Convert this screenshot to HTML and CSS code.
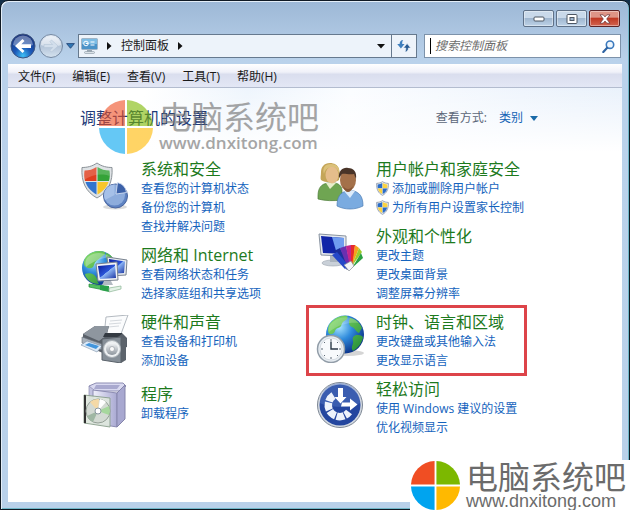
FILE: index.html
```html
<!DOCTYPE html>
<html lang="zh-CN">
<head>
  <meta charset="UTF-8">
  <meta name="viewport" content="width=device-width, initial-scale=1.0">
  <title>控制面板</title>
  <link rel="stylesheet" href="styles.css">
</head>
<body>
  <!-- shared gradients and symbols -->
  <svg class="defs" width="0" height="0" aria-hidden="true">
    <defs>
      <radialGradient id="globe" cx="0.35" cy="0.3" r="0.75">
        <stop offset="0" stop-color="#a8e4ff"/><stop offset="0.45" stop-color="#2f8bdc"/><stop offset="1" stop-color="#0a2f86"/>
      </radialGradient>
      <linearGradient id="screen" x1="0" y1="0" x2="1" y2="1">
        <stop offset="0" stop-color="#0a1c9c"/><stop offset="0.5" stop-color="#2b55d8"/><stop offset="0.52" stop-color="#8db6f5"/><stop offset="1" stop-color="#16309f"/>
      </linearGradient>
      <linearGradient id="land" x1="0" y1="0" x2="1" y2="1">
        <stop offset="0" stop-color="#8be06a"/><stop offset="1" stop-color="#1f8a34"/>
      </linearGradient>
      <linearGradient id="metal" x1="0" y1="0" x2="0" y2="1">
        <stop offset="0" stop-color="#f4f6f8"/><stop offset="1" stop-color="#8d959d"/>
      </linearGradient>
      <linearGradient id="lilac" x1="0" y1="0" x2="1" y2="0">
        <stop offset="0" stop-color="#f0f0fb"/><stop offset="1" stop-color="#a9a9d2"/>
      </linearGradient>
      <radialGradient id="navBlue" cx="0.5" cy="0.9" r="0.9">
        <stop offset="0" stop-color="#3fc0f5"/><stop offset="0.4" stop-color="#1b58b8"/><stop offset="1" stop-color="#1a3077"/>
      </radialGradient>
      <linearGradient id="navGrey" x1="0" y1="0" x2="0" y2="1">
        <stop offset="0" stop-color="#e6edf6"/><stop offset="0.5" stop-color="#b3c4d8"/><stop offset="1" stop-color="#d5e2ef"/>
      </linearGradient>
      <symbol id="uac" viewBox="0 0 14 16">
        <path d="M7 .6C5 2 3 2.4.7 2.5.3 9 2.600 13 7 15.400 11.400 13 13.700 9 13.300 2.500 11 2.400 9 2 7 .6z" fill="#e8eef5" stroke="#7d8a9c" stroke-width=".8"/>
        <path d="M6.800 2.200V7.600H1.900C1.700 6.300 1.700 5 1.800 3.600 3.700 3.500 5.200 3.100 6.800 2.200z" fill="#2a6cc8"/>
        <path d="M7.200 2.200V7.600h4.900c.2-1.300.2-2.600.1-4C10.300 3.500 8.800 3.100 7.200 2.200z" fill="#fbd341"/>
        <path d="M6.800 8v6C4.100 12.500 2.600 10.600 2 8z" fill="#fbd341"/>
        <path d="M7.200 8v6C9.900 12.500 11.400 10.600 12 8z" fill="#2a6cc8"/>
      </symbol>
      <symbol id="disc" viewBox="0 0 54 54">
        <path d="M26 0v26H0A27 27 0 0 1 26 0z" fill="#f04e23"/>
        <path d="M28 0v26h26A27 27 0 0 0 28 0z" fill="#7cb800"/>
        <path d="M26 54V28H0a27 27 0 0 0 26 26z" fill="#00a4ef"/>
        <path d="M28 54V28h26a27 27 0 0 1-26 26z" fill="#ffb900"/>
      </symbol>
    </defs>
  </svg>

  <div class="window">
    <div class="titlebar">
      <button class="win-btn" aria-label="最小化">
        <svg width="12" height="7" viewBox="0 0 12 7"><rect x="1" y="2" width="10" height="4" rx="1" fill="#fff" stroke="#4d5663"/></svg>
      </button>
      <button class="win-btn" aria-label="最大化">
        <svg width="12" height="10" viewBox="0 0 12 10"><rect x="1" y=".5" width="10" height="9" rx="1" fill="#fff" stroke="#4d5663"/><rect x="4" y="3.500" width="4" height="3" fill="#9fb6cf" stroke="#4d5663"/></svg>
      </button>
      <button class="win-btn close-btn" aria-label="关闭">
        <svg width="12" height="10" viewBox="0 0 12 10"><path d="M1 .8h3.200L6 2.900 7.800.8H11L7.700 5 11 9.200H7.800L6 7.100 4.200 9.200H1L4.300 5z" fill="#fff" stroke="#6e3a3c" stroke-width=".8"/></svg>
      </button>
    </div>

    <div class="navbar">
      <div class="nav-buttons">
        <button class="nav-btn" aria-label="后退">
          <svg width="26" height="26" viewBox="0 0 26 26"><circle cx="13" cy="13" r="12" fill="url(#navBlue)" stroke="#3d5580" stroke-width="1"/><path d="M3 12a10 9.500 0 0 1 20 0c-5 2-15 2-20 0z" fill="#fff" opacity=".35"/><path d="M5 13l7.500-7 2 2-3.200 3.300H21v3.600h-9.700l3.200 3.200-2 2z" fill="#fff"/></svg>
        </button>
        <button class="nav-btn" aria-label="前进">
          <svg width="26" height="26" viewBox="0 0 26 26"><circle cx="13" cy="13" r="11.500" fill="url(#navGrey)" stroke="#7488a2"/><path d="M3 12a10 9 0 0 1 20 0c-5 2-15 2-20 0z" fill="#fff" opacity=".45"/><path d="M20 13l-6.500-6-1.600 1.700 2.800 2.800H6v3h8.700l-2.800 2.800 1.600 1.700z" fill="#d3dfec" stroke="#b4c4d6" stroke-width=".6"/></svg>
        </button>
        <button class="nav-btn nav-history" aria-label="最近的页面">
          <svg width="9" height="6" viewBox="0 0 9 6"><path d="M.6.600h7.800L4.500 5.300z" fill="#2f77b5" stroke="#1f3f70" stroke-width=".8"/></svg>
        </button>
      </div>
      <div class="address">
        <nav class="crumbs" aria-label="地址">
          <svg width="17" height="16" viewBox="0 0 17 16"><rect x=".5" y=".5" width="16" height="11" rx="1" fill="#4a93c8" stroke="#9fb4c6"/><path d="M1 1h15v5H1z" fill="#7cbce4"/><circle cx="5" cy="5.500" r="2.300" fill="none" stroke="#fff"/><path d="M5 5.500h2M9.500 4h4M9.500 7h4" stroke="#fff" stroke-width="1.200"/><path d="M6 12h5v2H6z" fill="#9aa6b1"/><rect x="3.500" y="13.500" width="10" height="2" rx="1" fill="#dbe2e8" stroke="#8795a3" stroke-width=".6"/></svg>
          <svg class="crumb-arrow" width="5" height="8" viewBox="0 0 5 8"><path d="M0 0l4.500 4L0 8z"/></svg>
          <a class="crumb" href="#">控制面板</a>
          <svg class="crumb-arrow" width="5" height="8" viewBox="0 0 5 8"><path d="M0 0l4.500 4L0 8z"/></svg>
        </nav>
        <button class="address-drop" aria-label="以前的位置">
          <svg width="8" height="5" viewBox="0 0 8 5"><path d="M0 0h8L4 4.500z" fill="#111"/></svg>
        </button>
        <button class="refresh" aria-label="刷新">
          <svg width="14" height="14" viewBox="0 0 14 14"><path d="M6.200 1C3.800 1.200 2.600 2.600 2.600 5H.2l3.700 4.400L7.600 5H5.200c0-1.800.1-3 1-4z" fill="#3f7fbd"/><path d="M7.800 13c2.400-.2 3.600-1.600 3.600-4h2.400l-3.700-4.400L6.400 9h2.400c0 1.800-.1 3-1 4z" fill="#2b5d94" stroke="#edf3fa" stroke-width=".6"/></svg>
        </button>
      </div>
      <form class="search">
        <input class="search-input" type="text" placeholder="搜索控制面板" aria-label="搜索控制面板">
        <button class="search-btn" type="button" aria-label="搜索">
          <svg width="13" height="13" viewBox="0 0 13 13"><circle cx="8" cy="4.700" r="3.700" fill="#eef6fd" stroke="#3b79bd" stroke-width="1.600"/><path d="M5.200 7.800L1.300 11.900" stroke="#2f64a3" stroke-width="2.200" stroke-linecap="round"/></svg>
        </button>
      </form>
    </div>

    <div class="client">
      <div class="menubar">
        <button class="menu-item">文件(F)</button>
        <button class="menu-item">编辑(E)</button>
        <button class="menu-item">查看(V)</button>
        <button class="menu-item">工具(T)</button>
        <button class="menu-item">帮助(H)</button>
      </div>

      <main class="panel">
        <div class="panel-header">
          <h1>调整计算机的设置</h1>
          <div class="view-by">
            <label for="viewBy">查看方式:</label>
            <select id="viewBy">
              <option>类别</option>
            </select>
          </div>
          <div class="watermark watermark-faded">
            <svg class="watermark-disc" viewBox="0 0 54 54"><use href="#disc"/></svg>
            <div class="watermark-text">
              <span class="watermark-name">电脑系统吧</span>
              <span class="watermark-url">www.dnxitong.com</span>
            </div>
          </div>
        </div>

        <div class="categories">
          <div class="column">
            <section class="category">
              <svg class="category-icon" viewBox="0 0 48 48">
                <path d="M16 1C11 4.500 6 5.500 1 5.500 0 20 5 30 16 36 27 30 32 20 31 5.500 26 5.500 21 4.500 16 1z" fill="#dfe3e6" stroke="#8b9298"/>
                <path d="M15.500 5v14H4C3 16 3 12 3.500 8.500 8 8.500 12 7.500 15.500 5z" fill="#df3f20"/>
                <path d="M16.500 5v14H28c1-3 1-7 .5-10.500C24 8.500 20 7.500 16.500 5z" fill="#35a338"/>
                <path d="M15.500 20v12.500C9.500 29 6 25 4.500 20z" fill="#3275cf"/>
                <path d="M16.500 20v12.500C22.500 29 26 25 27.500 20z" fill="#f8c62c"/>
                <path d="M3 8c6 0 10-1.500 13-4 3 2.500 7 4 13 4 0 2 0 4-.5 6C20 11 10 13 3 18z" fill="#fff" opacity=".18"/>
                <ellipse cx="34" cy="45" rx="12" ry="2.500" fill="#999" opacity=".35"/>
                <circle cx="34.500" cy="34" r="12" fill="#5f83c2" stroke="#4a659e"/>
                <circle cx="33.500" cy="33" r="10.500" fill="#8dacdc"/>
                <path d="M33.500 33V22.500A11 11 0 0 0 24 38z" fill="#a6c0e8"/>
                <path d="M35 32l1.500-11.500a12 12 0 0 1 9 10z" fill="#3c61a8" stroke="#dfe9f7" stroke-width=".8"/>
              </svg>
              <div class="category-body">
                <h2><a href="#">系统和安全</a></h2>
                <ul>
                  <li><a href="#">查看您的计算机状态</a></li>
                  <li><a href="#">备份您的计算机</a></li>
                  <li><a href="#">查找并解决问题</a></li>
                </ul>
              </div>
            </section>

            <section class="category">
              <svg class="category-icon" viewBox="0 0 48 48">
                <circle cx="18" cy="20" r="17" fill="url(#globe)"/>
                <path d="M5 9C10 3 18 2 24 4c1 3-3 4-5 6s-5 3-6 7-5 4-8 2-3-6 0-10zM4 26c5-2 9 0 11 3s1 5 3 7C11 36 5 32 4 26zM25 5c4 1 7 4 8 7l-6 1c-2-2-3-5-2-8z" fill="url(#land)"/>
                <path d="M6 10C11 4 22 3 29 9c-6 1-16 3-24 10-1-3-1-6 1-9z" fill="#fff" opacity=".3"/>
                <path d="M26 9l20 3-1 15-17 1z" fill="#e6eaef" stroke="#78828f"/>
                <path d="M28 11l16 2.500-1 11.500-14 1z" fill="url(#screen)"/>
                <path d="M15 16l21-2 1 18-20 1z" fill="#f1f3f6" stroke="#78828f"/>
                <path d="M17 18l17-1.500 1 13.500-16 1z" fill="url(#screen)"/>
                <path d="M23 33h7l2 4H21z" fill="#b3bac2"/>
                <path d="M8 36l15 2v4L8 39z" fill="#52c161" stroke="#238a38" stroke-width=".7"/>
                <path d="M19 37l9 1v6l-9-2z" fill="#2ba04a"/>
                <path d="M28 40l12-2v3l-12 3z" fill="#e4f3e7" stroke="#8bb495" stroke-width=".7"/>
              </svg>
              <div class="category-body">
                <h2><a href="#">网络和 Internet</a></h2>
                <ul>
                  <li><a href="#">查看网络状态和任务</a></li>
                  <li><a href="#">选择家庭组和共享选项</a></li>
                </ul>
              </div>
            </section>

            <section class="category">
              <svg class="category-icon" viewBox="0 0 48 48">
                <path d="M25 2l22-2-7 19-17 2z" fill="#fbfcfd" stroke="#b4bac1"/>
                <path d="M29 6l12-1M28 9l12-1M27 12l11-1" stroke="#d5d9de"/>
                <path d="M2 19l12-8h14l-2 8h16l4 4v9l-24 6-20-8z" fill="#596069"/>
                <path d="M2 19l12-8h14l-3 10-7 5z" fill="#8e969f"/>
                <path d="M24 18h18l-5 4H22z" fill="#333a42"/>
                <path d="M1 22l20 7v6L1 28z" fill="#a9b1ba" stroke="#666e78" stroke-width=".6"/>
                <path d="M0 30l6-4 15 5-5 6z" fill="#dbe9f7" stroke="#7d90a6" stroke-width=".6"/>
                <path d="M4 30l4-2 10 3-3 3z" fill="#4295dc"/>
                <path d="M40 22l5 2v21l-5 3z" fill="#5d646c"/>
                <path d="M21 24l19-2v26l-19-3z" fill="#868f98" stroke="#5a626a"/>
                <circle cx="31" cy="34" r="8.500" fill="#edf0f2" stroke="#aab0b6"/>
                <circle cx="31" cy="34" r="6" fill="url(#metal)"/>
                <circle cx="31" cy="34" r="2.500" fill="#fafafa" stroke="#8b929a" stroke-width=".6"/>
              </svg>
              <div class="category-body">
                <h2><a href="#">硬件和声音</a></h2>
                <ul>
                  <li><a href="#">查看设备和打印机</a></li>
                  <li><a href="#">添加设备</a></li>
                </ul>
              </div>
            </section>

            <section class="category">
              <svg class="category-icon" viewBox="0 0 48 48">
                <path d="M8 4l7-3h27l3 3-5 5H12z" fill="#d9d9f0" stroke="#8c8cb2"/>
                <path d="M15 3h24l-3 4H13z" fill="#a9a9cf"/>
                <path d="M8 4l5 4v33l-5-4z" fill="#c3c3e0" stroke="#8c8cb2" stroke-width=".7"/>
                <path d="M12 8l24 3v34l-24-4z" fill="url(#lilac)" stroke="#8c8cb2"/>
                <path d="M36 11l8-8v34l-8 8z" fill="#a8a8d0" stroke="#8585ab"/>
                <path d="M3 13l26 3v29L3 41z" fill="#dfe8de" stroke="#8ba08d" opacity=".92"/>
                <path d="M3 13l2 .3v28L3 41z" fill="#333"/>
                <circle cx="17" cy="29" r="12" fill="#d3dad3" stroke="#95a097"/>
                <path d="M17 29L9 20a12 12 0 0 1 9-3z" fill="#f4d9a6"/>
                <path d="M17 29l11-5a12 12 0 0 1 0 9z" fill="#a6d79d"/>
                <path d="M17 29l-5 11a12 12 0 0 1-6-6z" fill="#9fb7a3"/>
                <path d="M17 29l8-9a12 12 0 0 0-6-3z" fill="#fff"/>
                <circle cx="17" cy="29" r="3" fill="#fff" stroke="#8a97a0"/>
              </svg>
              <div class="category-body">
                <h2><a href="#">程序</a></h2>
                <ul>
                  <li><a href="#">卸载程序</a></li>
                </ul>
              </div>
            </section>
          </div>

          <div class="column">
            <section class="category">
              <svg class="category-icon" viewBox="0 0 48 48">
                <path d="M2 34c0-8 3-12 10-13h7c5 1 7 4 7 8v9c-8 1-17 1-24-1z" fill="#6fa552" stroke="#4b7b36" stroke-width=".7"/>
                <path d="M10 21l4 6 6-6z" fill="#e7eecb"/>
                <path d="M14 1C8 1 5 5 5 10c0 4-1 6 0 8 4 3 14 3 18 0 1-4 1-8 0-11-1-4-5-6-9-6z" fill="#c4a558"/>
                <ellipse cx="16" cy="13" rx="6.500" ry="8.500" fill="#e5bd8b"/>
                <path d="M8 12C9 6 14 5 16 5c4 0 6 3 7 6 1-6-3-9-8-9-6 0-9 4-7 10z" fill="#dbc17a"/>
                <path d="M21 44c0-9 3-13 9-15h8c6 2 9 6 9 15-8 4-18 4-26 0z" fill="#7aabe0" stroke="#4c7cb4" stroke-width=".7"/>
                <path d="M28 29l6 7 5-7z" fill="#dcebfa"/>
                <ellipse cx="32" cy="18" rx="8" ry="11" fill="#a4714a"/>
                <path d="M23 16c-1-7 4-11 9-10 6 0 9 4 8 11l-2-5c-5 1-10-1-12 0z" fill="#493428"/>
                <path d="M27 24c3 4 7 4 10 0-1 4-3 6-5 6s-4-2-5-6z" fill="#875636"/>
              </svg>
              <div class="category-body">
                <h2><a href="#">用户帐户和家庭安全</a></h2>
                <ul>
                  <li><svg class="shield" viewBox="0 0 14 16"><use href="#uac"/></svg><a href="#">添加或删除用户帐户</a></li>
                  <li><svg class="shield" viewBox="0 0 14 16"><use href="#uac"/></svg><a href="#">为所有用户设置家长控制</a></li>
                </ul>
              </div>
            </section>

            <section class="category">
              <svg class="category-icon" viewBox="0 0 48 48">
                <ellipse cx="17" cy="34" rx="11" ry="3" fill="#c9d0d8" stroke="#9aa3ad" stroke-width=".6"/>
                <path d="M14 26h8v7h-8z" fill="#aab3bd"/>
                <path d="M3 5l27 2v20L5 26z" fill="#e6eaef" stroke="#8893a0"/>
                <path d="M5 7l23 2v16L7 24z" fill="#1126a8"/>
                <path d="M16 8l12 1v14L21 25z" fill="#6f9df0"/>
                <path d="M18 22l6-3 10 20-3 2z" fill="#1b2e98"/>
                <path d="M24 19l6-2 5 21-3 2z" fill="#6a2fb0"/>
                <path d="M30 17l5-1 1 22-2 1z" fill="#c5258e"/>
                <path d="M35 16l4 0-2 22h-2z" fill="#e52b2b"/>
                <path d="M39 16l4 3-7 18z" fill="#f5a11c"/>
                <path d="M43 19l3 4-10 14z" fill="#9dcb29"/>
                <path d="M45 24l2 5-11 10z" fill="#2ba142"/>
                <path d="M16 26l5-3 12 14-4 3z" fill="#2548c8"/>
                <path d="M28 36l7-4 3 5-5 5z" fill="#f5f6f8" stroke="#8a8f96" stroke-width=".7"/>
              </svg>
              <div class="category-body">
                <h2><a href="#">外观和个性化</a></h2>
                <ul>
                  <li><a href="#">更改主题</a></li>
                  <li><a href="#">更改桌面背景</a></li>
                  <li><a href="#">调整屏幕分辨率</a></li>
                </ul>
              </div>
            </section>

            <section class="category highlighted">
              <svg class="category-icon" viewBox="0 0 48 48">
                <ellipse cx="32" cy="38" rx="16" ry="3" fill="#888" opacity=".35"/>
                <circle cx="29" cy="19.500" r="19" fill="url(#globe)"/>
                <path d="M13 10C17 4 24 0 31 1c2 3-2 4-4 6s-1 5-5 6-2 5-6 6-5-3-3-9zM34 3c6 1 10 5 12 10l-3 5c-3-1-4-5-7-6s-4-5-2-9zM40 20c3 0 5 0 7 2-1 6-5 11-10 14-3-4 1-7 0-10s0-5 3-6z" fill="url(#land)"/>
                <path d="M14 10C20 1 35-1 43 8c-9-1-20 1-30 9-1-2 0-5 1-7z" fill="#fff" opacity=".2"/>
                <circle cx="15" cy="34" r="13.500" fill="#e7edf2" stroke="#929da8" stroke-width="1.500"/>
                <circle cx="15" cy="34" r="11" fill="#f8fafc" stroke="#c2cad2" stroke-width=".6"/>
                <path d="M15 24v2M15 42v2M5 34h2M23 34h2M8 27l1 1M21 40l1 1M8 41l1-1M21 28l1-1" stroke="#5e6a76"/>
                <path d="M15 26.500V34h7" fill="none" stroke="#2b3947" stroke-width="1.400"/>
              </svg>
              <div class="category-body">
                <h2><a href="#">时钟、语言和区域</a></h2>
                <ul>
                  <li><a href="#">更改键盘或其他输入法</a></li>
                  <li><a href="#">更改显示语言</a></li>
                </ul>
              </div>
            </section>

            <section class="category">
              <svg class="category-icon" viewBox="0 0 48 48">
                <circle cx="24" cy="23" r="22.500" fill="#d5dbe3" stroke="#7d8794"/>
                <circle cx="24" cy="23" r="20.500" fill="#24469f"/>
                <path d="M4 21a20 20 0 0 1 40 0c-10 5-30 5-40 0z" fill="#5779c6" opacity=".45"/>
                <path d="M17.500 13.500A11.500 11.500 0 1 0 33 30" fill="none" stroke="#eef3fb" stroke-width="7.500" stroke-dasharray="7.500 1.200"/>
                <path d="M22 6h5v9h3.500l-6 6.500-6-6.500H22z" fill="#fff"/>
                <path d="M26 20.500h8v-4l7.500 6-7.500 6v-4h-9z" fill="#fff"/>
              </svg>
              <div class="category-body">
                <h2><a href="#">轻松访问</a></h2>
                <ul>
                  <li><a href="#">使用 Windows 建议的设置</a></li>
                  <li><a href="#">优化视频显示</a></li>
                </ul>
              </div>
            </section>
          </div>
        </div>
      </main>
    </div>
  </div>

  <div class="watermark watermark-corner">
    <svg class="watermark-disc" viewBox="0 0 54 54"><use href="#disc"/></svg>
    <div class="watermark-text">
      <span class="watermark-name">电脑系统吧</span>
      <span class="watermark-url">www.dnxitong.com</span>
    </div>
  </div>
</body>
</html>
```
FILE: styles.css
```css
* {
  margin: 0;
  padding: 0;
  box-sizing: border-box;
}
body {
  font-family: "Open Sans", "Noto Sans CJK SC", sans-serif;
  font-size: 12px;
  line-height: 20px;
  color: #1a1a1a;
  background: #14304a;
  min-height: 100vh;
  position: relative;
  display: flex;
  flex-direction: column;
}
button, input, select {
  font: inherit;
  color: inherit;
  border: none;
  background: none;
}
button {
  cursor: pointer;
}
a {
  color: inherit;
  text-decoration: none;
}
svg {
  display: block;
  flex: none;
}
.defs {
  position: absolute;
}

/* window frame */
.window {
  flex: 1;
  display: flex;
  flex-direction: column;
  padding: 0 7px 7px;
  border: 1px solid #101a24;
  border-radius: 8px 8px 0 0;
  background: linear-gradient(#9db8d6, #bad2eb 60px, #b9d1ea);
  box-shadow: inset 1px 1px 0 #e4eef8, inset -1px -1px 0 #6fb7c9;
}
.titlebar {
  display: flex;
  justify-content: flex-end;
  gap: 2px;
  padding: 9px 2px 7px;
}
.win-btn {
  width: 31px;
  height: 17px;
  display: flex;
  align-items: center;
  justify-content: center;
  border: 1px solid #5f7188;
  border-radius: 2px;
  background: linear-gradient(#c9d9ea 45%, #a0b7d0 50%, #bdd2e7);
  box-shadow: inset 0 0 0 1px rgba(255, 255, 255, 0.4);
}
.close-btn {
  border-color: #5c2325;
  background: linear-gradient(#de9586 40%, #c03a24 50%, #d26450);
}

/* navigation row */
.navbar {
  display: flex;
  align-items: center;
  gap: 7px;
  height: 24px;
  margin-bottom: 6px;
  padding-right: 1px;
}
.nav-buttons {
  display: flex;
  align-items: center;
  gap: 2px;
  padding-left: 2px;
}
.nav-history {
  margin-right: -4px;
}
.address {
  flex: 1;
  height: 24px;
  display: flex;
  border: 1px solid #66798e;
  background: #edf3fa;
}
.crumbs {
  flex: 1;
  display: flex;
  align-items: center;
  gap: 9px;
  padding-left: 2px;
}
.crumb-arrow {
  fill: #111;
}
.address-drop {
  width: 20px;
  display: flex;
  align-items: center;
  justify-content: center;
}
.refresh {
  width: 25px;
  display: flex;
  align-items: center;
  justify-content: center;
  border-left: 1px solid #66798e;
}
.search {
  width: 197px;
  height: 24px;
  display: flex;
  align-items: center;
  padding: 0 5px;
  border: 1px solid #7d92aa;
  background: #fff;
}
.search-input {
  flex: 1;
  min-width: 0;
  height: 16px;
  padding-left: 4px;
  border-left: 1px solid #000;
  outline: none;
}
.search-input::placeholder {
  color: #6d6d6d;
  font-style: italic;
  opacity: 1;
}

/* client area */
.client {
  flex: 1;
  display: flex;
  flex-direction: column;
  background: #fff;
}
.menubar {
  display: flex;
  gap: 17px;
  height: 24px;
  padding: 2px 10px 0;
  border-bottom: 1px solid #b3bccf;
  background: linear-gradient(#fff, #f0f1f9 35%, #dadeee 45%, #e3e7f5);
}
.panel {
  flex: 1;
  background: linear-gradient(rgba(255, 255, 255, 0), #fff 64px), linear-gradient(100deg, #fff 20%, #eef5fd 35%, #fbfdff 50%, #eff5fd 75%, #e6effa);
}
.panel-header {
  position: relative;
  display: flex;
  justify-content: space-between;
  align-items: center;
  padding: 20px 84px 0 72px;
}
h1 {
  font-size: 16px;
  font-weight: normal;
  line-height: 20px;
  color: #1e3a78;
}
.view-by {
  display: flex;
  align-items: center;
  color: #5b6678;
}
.view-by label {
  margin-right: 12px;
}
.view-by select {
  appearance: none;
  color: #1463b5;
}
.view-by::after {
  content: "";
  margin-left: 6px;
  border: 4px solid transparent;
  border-top: 5px solid #1a6aa8;
  border-bottom: none;
}

/* categories */
.categories {
  display: grid;
  grid-template-columns: 1fr 1fr;
  padding: 31px 71px 20px 73px;
}
.column {
  display: flex;
  flex-direction: column;
  gap: 9px;
}
.category {
  position: relative;
  display: flex;
  align-items: flex-start;
  gap: 12px;
}
.category-icon {
  width: 48px;
  height: 48px;
  margin-top: 3px;
}
.category-body {
  min-height: 48px;
  display: flex;
  flex-direction: column;
  justify-content: center;
}
h2 {
  font-size: 16px;
  font-weight: normal;
  line-height: 20px;
  color: #1d7a1d;
}
ul {
  list-style: none;
}
li {
  display: flex;
  align-items: center;
  gap: 3px;
  line-height: 19px;
  color: #1463bd;
  white-space: nowrap;
}
a:hover {
  text-decoration: underline;
}
.shield {
  width: 13px;
  height: 15px;
}
.highlighted::after {
  content: "";
  position: absolute;
  inset: -7px 24px -6px -10px;
  border: 3px solid #dd4449;
  pointer-events: none;
}

/* site watermarks */
.watermark {
  position: absolute;
  display: flex;
  align-items: center;
  pointer-events: none;
}
.watermark-text {
  display: flex;
  flex-direction: column;
  color: #6b6b6b;
}
.watermark-name {
  font-size: 32px;
  font-weight: 300;
  line-height: 32px;
  white-space: nowrap;
}
.watermark-faded {
  left: 91px;
  top: 12px;
  gap: 6px;
  opacity: 0.6;
}
.watermark-faded .watermark-name {
  font-weight: normal;
}
.watermark-faded .watermark-url {
  font-size: 17px;
  font-weight: 600;
  line-height: 20px;
}
.watermark-faded .watermark-disc {
  width: 54px;
  height: 54px;
}
.watermark-corner {
  right: 0;
  bottom: 0;
  gap: 6px;
  padding: 1px 4px 0 1px;
  background: #fff;
}
.watermark-corner .watermark-name {
  font-weight: normal;
  line-height: 30px;
}
.watermark-corner .watermark-disc {
  width: 49px;
  height: 49px;
}
.watermark-corner .watermark-url {
  font-family: "Liberation Sans", sans-serif;
  font-size: 18px;
  line-height: 18px;
}
```
